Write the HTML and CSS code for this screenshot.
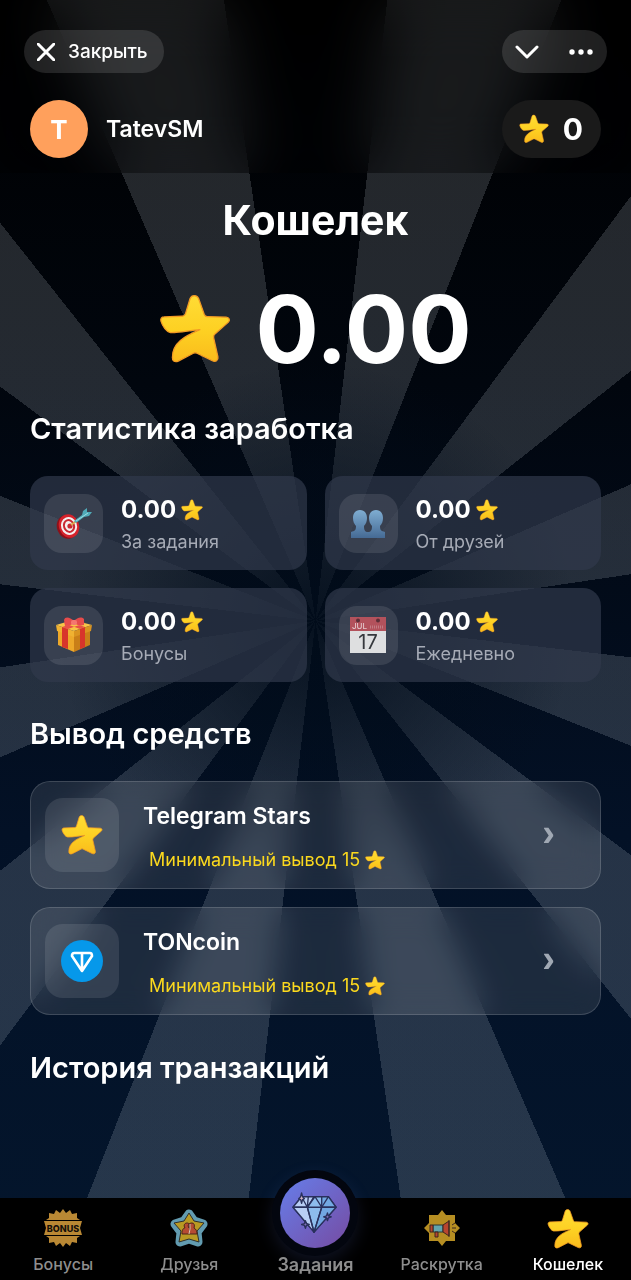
FILE: index.html
```
<!DOCTYPE html>
<html lang="ru">
<head>
    <meta charset="UTF-8">
    <meta name="viewport" content="width=device-width, initial-scale=1.0">
    <title>Кошелек</title>

    <link rel="stylesheet" href="styles.css">
</head>

<body>
    <!-- shared icons -->
    <svg class="sprite" aria-hidden="true">
        <defs>
            <linearGradient id="starFill" x1="0" y1="0" x2="0" y2="1">
                <stop offset="0" stop-color="#ffdc35"></stop>
                <stop offset="0.55" stop-color="#fdd022"></stop>
                <stop offset="1" stop-color="#fabb1c"></stop>
            </linearGradient>
        </defs>
        <symbol id="star" viewBox="27 38 220 220">
            <path fill="url(#starFill)" stroke="#f39a24" stroke-width="4" stroke-linejoin="round" d="M135 46c8 0 11 5 13 9l17 48c2 5 5 7 10 7l57 2c10 1 13 9 7 15l-41 36c-4 4-5 8-4 12l13 58c2 11-7 17-17 12l-47-23c-4-2-7-2-11 0l-46 24c-12 5-19-2-18-12C68 190 105 170 152 150 120 152 90 160 62 159 50 157 38 140 33 124c-2-8 2-13 9-13l55-2c6 0 9-3 11-8l14-46c2-5 6-9 13-9z"/>
        </symbol>
    </svg>

    <header class="header">
        <div class="topBar">
            <button type="button" class="pill closeButton">
                <svg width="18" height="18" viewBox="0 0 18 18"><path d="M1 1l16 16M17 1L1 17"/></svg>
                Закрыть
            </button>
            <div class="pill menuPill">
                <button type="button" class="iconButton" aria-label="Свернуть">
                    <svg width="24" height="16" viewBox="0 0 24 16"><path d="M2 3l10 10L22 3"/></svg>
                </button>
                <button type="button" class="iconButton" aria-label="Меню">
                    <svg class="dots" width="24" height="6" viewBox="0 0 24 6"><circle cx="3" cy="3" r="2.7"/><circle cx="12" cy="3" r="2.7"/><circle cx="21" cy="3" r="2.7"/></svg>
                </button>
            </div>
        </div>
        <div class="userBar">
            <div class="avatar">T</div>
            <div class="userName">TatevSM</div>
            <div class="balance">
                <svg width="30" height="30"><use href="#star"/></svg>
                <span>0</span>
            </div>
        </div>
    </header>

    <main class="content">
        <h1 class="title">Кошелек</h1>
        <div class="total">
            <svg width="72" height="72"><use href="#star"/></svg>
            <span>0.00</span>
        </div>

        <h2 class="sectionTitle">Статистика заработка</h2>
        <div class="stats">
            <div class="stat">
                <div class="statIcon">
                    <svg width="36" height="36" viewBox="0 0 36 36">
                        <ellipse cx="11" cy="22" rx="10" ry="12" fill="#8e1119" transform="rotate(-20 11 22)"/>
                        <ellipse cx="13" cy="21" rx="10" ry="12" fill="#d5222b" transform="rotate(-20 13 21)"/>
                        <ellipse cx="13" cy="21" rx="8" ry="9" fill="#f4eeee" transform="rotate(-20 13 21)"/>
                        <ellipse cx="13" cy="21" rx="6" ry="7" fill="#c92831" transform="rotate(-20 13 21)"/>
                        <ellipse cx="13" cy="21" rx="4" ry="5" fill="#f4eeee" transform="rotate(-20 13 21)"/>
                        <circle cx="14" cy="21" r="2.6" fill="#c92831"/>
                        <path d="M15 20l8-6" stroke="#d9a94a" stroke-width="1.6"/>
                        <path d="M18 16l8-6 1-4 4-3v4l5 0-3 4-5 1-8 6z" fill="#50aab8"/>
                        <path d="M20 16l12-8" stroke="#9ddde3" stroke-width="1"/>
                    </svg>
                </div>
                <div class="statText">
                    <div class="statValue">0.00 <svg width="22" height="22"><use href="#star"/></svg></div>
                    <div class="statLabel">За задания</div>
                </div>
            </div>
            <div class="stat">
                <div class="statIcon">
                    <svg width="36" height="36" viewBox="0 0 36 36">
                        <defs>
                            <linearGradient id="people" x1="0" y1="0" x2="0" y2="1">
                                <stop offset="0" stop-color="#7fadd2"></stop>
                                <stop offset="1" stop-color="#456a94"></stop>
                            </linearGradient>
                        </defs>
                        <path fill="url(#people)" d="M10 5c5 0 7 4 7 8 0 3-1 6-3 8 0 4 1 6 4 6s4-2 4-6c-2-2-3-5-3-8 0-4 2-8 7-8s7 4 7 8c0 3-1 6-3 8 0 4 1 5 5 6v6H1v-6c4-1 5-2 5-6-2-2-3-5-3-8 0-4 2-8 7-8z"/>
                    </svg>
                </div>
                <div class="statText">
                    <div class="statValue">0.00 <svg width="22" height="22"><use href="#star"/></svg></div>
                    <div class="statLabel">От друзей</div>
                </div>
            </div>
            <div class="stat">
                <div class="statIcon">
                    <svg width="36" height="36" viewBox="0 0 36 36">
                        <path fill="#eda82a" d="M2 13l16 5v17L2 28z"/>
                        <path fill="#c97f18" d="M34 13l-16 5v17l16-7z"/>
                        <path fill="#f8c548" d="M0 8l17-5 19 5-18 6z"/>
                        <path fill="#f0b232" d="M0 8l18 6v6L1 14z"/>
                        <path fill="#da9420" d="M36 8l-18 6v6l17-6z"/>
                        <path fill="#d8352b" d="M6 10l6 2v20l-6-2zM24 12l5-2v20l-5 2z"/>
                        <path fill="#ea5048" d="M6 10l18-6 5 2-17 6zM29 10L12 4 8 6l16 6z"/>
                        <path fill="#e64c4c" d="M18 4C14 0 9-1 8 3l1 6c4 0 6-1 9-3 3 2 6 3 10 2V2c-3-3-7-1-10 2z"/>
                        <rect x="15" y="3" width="6" height="5" rx="2" fill="#f57770"/>
                    </svg>
                </div>
                <div class="statText">
                    <div class="statValue">0.00 <svg width="22" height="22"><use href="#star"/></svg></div>
                    <div class="statLabel">Бонусы</div>
                </div>
            </div>
            <div class="stat">
                <div class="statIcon">
                    <svg width="36" height="36" viewBox="0 0 36 36">
                        <path fill="#dedfe0" d="M0 13h36v23H0z"/>
                        <path fill="#b3525c" d="M0 0h36v14H0z"/>
                        <circle cx="8" cy="3.5" r="2" fill="#5c3038"/>
                        <circle cx="28" cy="3.5" r="2" fill="#5c3038"/>
                        <path d="M20 10h14" stroke="#c27c84" stroke-width="3" stroke-dasharray="1 1"/>
                        <text x="2" y="12" class="calMonth">JUL</text>
                        <text x="18" y="32" class="calDay">17</text>
                    </svg>
                </div>
                <div class="statText">
                    <div class="statValue">0.00 <svg width="22" height="22"><use href="#star"/></svg></div>
                    <div class="statLabel">Ежедневно</div>
                </div>
            </div>
        </div>

        <h2 class="sectionTitle">Вывод средств</h2>
        <div class="methods">
            <button type="button" class="method">
                <span class="methodIcon"><svg width="42" height="42"><use href="#star"/></svg></span>
                <span class="methodText">
                    <span class="methodName">Telegram Stars</span>
                    <span class="methodMin">Минимальный вывод 15 <svg width="20" height="20"><use href="#star"/></svg></span>
                </span>
                <span class="arrow">›</span>
            </button>
            <button type="button" class="method">
                <span class="methodIcon">
                    <svg width="42" height="42" viewBox="0 0 42 42">
                        <circle cx="21" cy="21" r="21" fill="#0698ea"/>
                        <path d="M13 13h16c2 0 2 2 2 3L21 31 11 16c0-1 0-3 2-3zM21 13v17" fill="none" stroke="#fff" stroke-width="2.6" stroke-linejoin="round"/>
                    </svg>
                </span>
                <span class="methodText">
                    <span class="methodName">TONcoin</span>
                    <span class="methodMin">Минимальный вывод 15 <svg width="20" height="20"><use href="#star"/></svg></span>
                </span>
                <span class="arrow">›</span>
            </button>
        </div>

        <h2 class="sectionTitle">История транзакций</h2>
    </main>

    <nav class="nav">
        <a href="#bonus" class="navItem">
            <svg width="38" height="38" viewBox="0 0 38 38">
                <path fill="#b98834" d="M19 0l3 4 4-3 2 4 5-1v5l3 2H2l3-2V4l5 1 2-4 4 3zM19 38l3-4 4 3 2-4 5 1v-5l3-2H2l3 2v5l5-1 2 4 4-3z"/>
                <path fill="#b98834" d="M0 12h38l-2 7 2 7H0l2-7z"/>
                <path stroke="#000" stroke-width="1" d="M4 11.5h30M4 26.5h30"/>
                <text x="19" y="23" class="bonusText">BONUS</text>
            </svg>
            Бонусы
        </a>
        <a href="#friends" class="navItem">
            <svg width="38" height="38" viewBox="0 0 38 38">
                <path fill="#629bb0" stroke="#629bb0" stroke-width="9" stroke-linejoin="round" d="M19 5l5 7 9 3-6 8 1 10-9-3-9 3 1-10-6-8 9-3z"/>
                <path fill="#b99a23" stroke="#30302b" stroke-width="1" stroke-linejoin="round" d="M19 4l5 8 10 2-7 8 2 11-10-3-10 3 2-11-7-8 10-2z"/>
                <path fill="#b64b32" stroke="#4a241b" d="M12 25c0-4 1-6 3-6-2-3 0-5 2-5s4 2 2 5c-2-3 0-5 3-5 2 0 3 2 2 5 2 1 3 3 3 6z"/>
                <path stroke="#d9c9b5" d="M20 15v5l-1 5"/>
            </svg>
            Друзья
        </a>
        <a href="#tasks" class="navItem navCenter">
            <span class="gem">
                <svg width="46" height="46" viewBox="0 0 48 48" stroke="#29305c" stroke-width="1.4" stroke-linejoin="round">
                    <path fill="#8dbcec" d="M10 7h28l8 11-23 26L1 18z"/>
                    <path fill="#b9cdf4" d="M10 7h7l-1 11H1zM17 7h6l-7 11zM1 18h15l7 26z"/>
                    <path fill="#72a8e2" d="M31 7h7l8 11H31zM31 18h15L23 44z"/>
                    <path fill="none" d="M10 7l6 11 8-11 7 11 7-11M1 18h45M16 18l7 26 8-26"/>
                    <path fill="#d5b5c2" d="M10 3l1 4 2 2-2 1-1 4-1-4-2-1 2-2z"/>
                    <path fill="#8170b8" d="M37 24l1 3 3 1-3 1-1 3-1-3-3-1 3-1zM14 32l1 3 3 1-3 1-1 3-1-3-3-1 3-1z"/>
                </svg>
            </span>
            Задания
        </a>
        <a href="#promo" class="navItem">
            <svg width="38" height="38" viewBox="0 0 38 38">
                <path fill="#b68e22" d="M19 1l4 5h9v8l5 5-5 5v8h-9l-4 5-4-5H6v-8l-5-5 5-5V6h9z"/>
                <path fill="#62a5ad" stroke="#293638" d="M10 16h10v7H10z"/>
                <path fill="#b8452f" stroke="#3b2720" d="M7 16h3v7H7zM12 23h3v5h-3zM20 16l6-4v15l-6-4z"/>
                <path stroke="#3b2720" d="M26 11v17M29 16l3-2M29 19h4M29 22l3 2"/>
            </svg>
            Раскрутка
        </a>
        <a href="#wallet" class="navItem active">
            <svg width="42" height="42"><use href="#star"/></svg>
            Кошелек
        </a>
    </nav>
</body>

</html>
```
FILE: styles.css
```
* {
    box-sizing: border-box;
    margin: 0;
    padding: 0;
}
body {
    min-height: 100vh;
    background-color: #020b18;
    color: white;
    font-family: "Inter", sans-serif;
}
/* sun rays behind everything, dimmed towards the middle */
body::before {
    content: "";
    position: fixed;
    inset: 0;
    z-index: -1;
    background:
        radial-gradient(circle at 50% 48.5%, rgba(1, 12, 26, 0.85), rgba(1, 12, 26, 0) 260px),
        repeating-conic-gradient(from 6.6deg at 50% 48.5%, rgba(235, 246, 255, 0.15) 0deg 15deg, transparent 15deg 30deg),
        linear-gradient(#000 0%, #01060e 30%, #031126 65%, #04162d 100%);
}
button {
    border: none;
    background: none;
    color: inherit;
    font: inherit;
    cursor: pointer;
}
a {
    color: inherit;
    text-decoration: none;
}
svg {
    flex-shrink: 0;
}
.sprite {
    position: absolute;
    width: 0;
    height: 0;
}

.header {
    display: flex;
    flex-direction: column;
    gap: 27px;
    padding: 30px 24px 15px;
    background-color: rgba(0, 0, 0, 0.3);
    backdrop-filter: blur(30px);
}
.topBar {
    display: flex;
    justify-content: space-between;
}
.pill {
    display: flex;
    align-items: center;
    height: 43px;
    border-radius: 22px;
    background-color: rgba(255, 255, 255, 0.12);
}
.pill svg {
    fill: none;
    stroke: white;
    stroke-width: 3;
    stroke-linecap: round;
    stroke-linejoin: round;
}
.pill .dots {
    fill: white;
    stroke: none;
}
.closeButton {
    gap: 13px;
    padding: 0 16px 0 13px;
    font-size: 19px;
    font-weight: 500;
}
.menuPill {
    justify-content: space-between;
    gap: 30px;
    padding: 0 14px 0 13px;
}
.iconButton {
    display: flex;
}
.userBar {
    display: flex;
    align-items: center;
    gap: 18px;
    padding: 0 6px;
}
.avatar {
    display: flex;
    align-items: center;
    justify-content: center;
    width: 58px;
    height: 58px;
    border-radius: 50%;
    background-color: #ffa05c;
    font-size: 26px;
    font-weight: 700;
}
.userName {
    flex: 1;
    font-size: 23px;
    font-weight: 600;
}
.balance {
    display: flex;
    align-items: center;
    gap: 14px;
    height: 58px;
    padding: 0 18px 0 17px;
    border-radius: 29px;
    background-color: #1a1a1a;
    font-size: 30px;
    font-weight: 700;
}

.content {
    padding: 20px 30px 120px;
}
.title {
    font-size: 41px;
    line-height: 54px;
    font-weight: 700;
    text-align: center;
}
.total {
    display: flex;
    align-items: center;
    justify-content: center;
    gap: 24px;
    margin: 24px 0 23px;
    font-size: 94px;
    line-height: 116px;
    font-weight: 700;
}
.sectionTitle {
    font-size: 29px;
    line-height: 38px;
    font-weight: 600;
}

.stats {
    display: grid;
    grid-template-columns: 1fr 1fr;
    gap: 18px;
    margin: 28px 0 33px;
}
.stat {
    display: flex;
    align-items: center;
    gap: 18px;
    height: 94px;
    padding: 0 14px;
    border-radius: 18px;
    background-color: rgba(48, 57, 76, 0.7);
}
.statIcon {
    display: flex;
    align-items: center;
    justify-content: center;
    width: 59px;
    height: 59px;
    border-radius: 18px;
    background-color: rgba(255, 255, 255, 0.1);
}
.statText {
    padding-top: 5px;
}
.calMonth {
    fill: #e4c8cb;
    font-size: 8px;
    font-weight: 500;
}
.calDay {
    fill: #35383c;
    font-size: 20px;
    text-anchor: middle;
}
.statValue {
    display: flex;
    align-items: center;
    gap: 5px;
    font-size: 24px;
    line-height: 32px;
    font-weight: 700;
}
.statLabel {
    font-size: 18px;
    line-height: 32px;
    color: #a6abb6;
}

.methods {
    display: flex;
    flex-direction: column;
    gap: 18px;
    margin: 28px 0 34px;
}
.method {
    display: flex;
    align-items: center;
    gap: 24px;
    height: 108px;
    padding: 0 45px 0 14px;
    border: 1px solid rgba(255, 255, 255, 0.15);
    border-radius: 20px;
    background-color: rgba(255, 255, 255, 0.1);
    backdrop-filter: blur(15px);
    text-align: left;
}
.methodIcon {
    display: flex;
    align-items: center;
    justify-content: center;
    width: 74px;
    height: 74px;
    border-radius: 18px;
    background-color: rgba(255, 255, 255, 0.1);
}
.methodText {
    flex: 1;
    display: flex;
    flex-direction: column;
    gap: 14px;
    padding-top: 6px;
}
.methodName {
    font-size: 23px;
    line-height: 30px;
    font-weight: 600;
}
.methodMin {
    display: flex;
    align-items: center;
    gap: 5px;
    padding-left: 6px;
    font-size: 18px;
    line-height: 30px;
    color: #fbd91e;
}
.arrow {
    font-family: "Liberation Sans", sans-serif;
    font-size: 38px;
    line-height: 44px;
    padding-bottom: 4px;
    font-weight: 700;
    color: #a0a8b3;
}

.nav {
    position: fixed;
    left: 0;
    right: 0;
    bottom: 0;
    display: grid;
    grid-template-columns: repeat(5, 1fr);
    grid-template-rows: 100%;
    align-items: end;
    height: 82px;
    background-color: black;
}
.navItem {
    display: flex;
    flex-direction: column;
    align-items: center;
    gap: 6px;
    padding-bottom: 5px;
    font-size: 16px;
    line-height: 22px;
    font-weight: 500;
    color: #8e8e8e;
}
.active {
    gap: 3px;
    color: white;
}
.navCenter {
    padding-bottom: 4px;
    font-size: 18px;
    font-weight: 600;
}
.gem {
    display: flex;
    align-items: center;
    justify-content: center;
    width: 70px;
    height: 70px;
    border-radius: 50%;
    background: linear-gradient(135deg, #667eea, #764ba2);
    box-shadow: 0 0 0 8px #03060f, 0 6px 18px 8px rgba(102, 126, 234, 0.15);
}
.bonusText {
    fill: #16100a;
    font-size: 9px;
    font-weight: 800;
    text-anchor: middle;
}
```
